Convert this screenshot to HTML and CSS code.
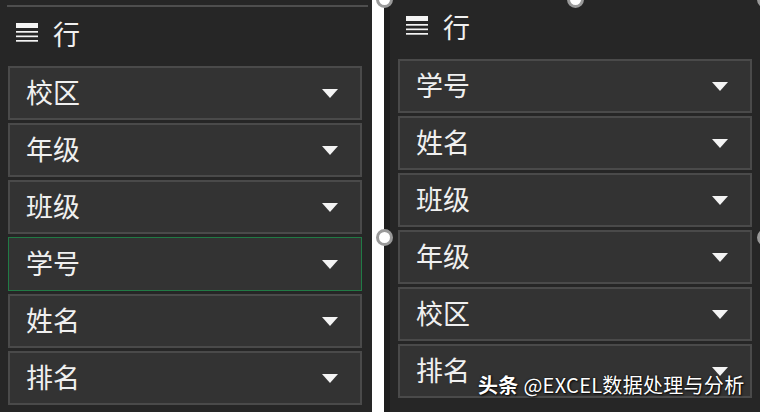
FILE: index.html
```html
<!DOCTYPE html>
<html lang="zh">
<head>
<meta charset="utf-8">
<link rel="stylesheet" href="styles.css">
</head>
<body>
<div class="stage">
  <section class="panel panel-left">
    <div class="rule"></div>
    <div class="head">
      <svg class="rows-icon" width="22" height="20" viewBox="0 0 22 20"><rect x="0" y="0" width="22" height="5" fill="#f4f4f4"/><rect x="0" y="8" width="22" height="1.7" fill="#f4f4f4"/><rect x="0" y="12.5" width="22" height="1.7" fill="#f4f4f4"/><rect x="0" y="17" width="22" height="1.7" fill="#f4f4f4"/></svg>
      <span class="head-text">行</span>
    </div>
    <ul class="fields">
      <li class="field"><span>校区</span><i class="arrow"></i></li>
      <li class="field"><span>年级</span><i class="arrow"></i></li>
      <li class="field"><span>班级</span><i class="arrow"></i></li>
      <li class="field selected"><span>学号</span><i class="arrow"></i></li>
      <li class="field"><span>姓名</span><i class="arrow"></i></li>
      <li class="field"><span>排名</span><i class="arrow"></i></li>
    </ul>
  </section>
  <section class="panel panel-right">
    <div class="head">
      <svg class="rows-icon" width="22" height="20" viewBox="0 0 22 20"><rect x="0" y="0" width="22" height="5" fill="#f4f4f4"/><rect x="0" y="8" width="22" height="1.7" fill="#f4f4f4"/><rect x="0" y="12.5" width="22" height="1.7" fill="#f4f4f4"/><rect x="0" y="17" width="22" height="1.7" fill="#f4f4f4"/></svg>
      <span class="head-text">行</span>
    </div>
    <ul class="fields">
      <li class="field"><span>学号</span><i class="arrow"></i></li>
      <li class="field"><span>姓名</span><i class="arrow"></i></li>
      <li class="field"><span>班级</span><i class="arrow"></i></li>
      <li class="field"><span>年级</span><i class="arrow"></i></li>
      <li class="field"><span>校区</span><i class="arrow"></i></li>
      <li class="field"><span>排名</span><i class="arrow"></i></li>
    </ul>
  </section>
  <span class="handle h-tl"></span>
  <span class="handle h-tm"></span>
  <span class="handle h-tr"></span>
  <span class="handle h-ml"></span>
  <span class="handle h-mr"></span>
  <div class="watermark"><b>头条</b> @EXCEL数据处理与分析</div>
</div>
</body>
</html>
```
FILE: styles.css
```css
html, body {
  margin: 0;
  padding: 0;
  background: #ffffff;
}
.stage {
  position: relative;
  width: 760px;
  height: 412px;
  overflow: hidden;
  display: flex;
  font-family: "Noto Sans CJK SC", "Noto Sans", sans-serif;
  color: #f0f0f0;
}
.panel {
  background: #262626;
  height: 412px;
  display: flex;
  flex-direction: column;
}
.panel-left {
  width: 372px;
}
.panel-right {
  margin-left: 12px;
  width: 370px;
  border-left: 6px solid #1e1e1e;
  flex: 1;
}
.rule {
  margin: 5px 4px 0 7px;
  height: 2px;
  background: #4e4e4e;
}
.head {
  display: flex;
  align-items: flex-start;
  box-sizing: border-box;
  gap: 15px;
  height: 59px;
  padding: 16px 0 0 16px;
}
.rows-icon {
  display: block;
}
.head-text {
  font-size: 27px;
  line-height: 26px;
  margin-top: -2px;
}
.fields {
  list-style: none;
  margin: 0;
  padding: 0 0 0 8px;
  width: 354px;
  display: flex;
  flex-direction: column;
  gap: 3px;
}
.field {
  box-sizing: border-box;
  height: 54px;
  background: #333333;
  border: 2px solid #4a4a4a;
  display: flex;
  align-items: center;
  justify-content: space-between;
  padding: 0 22px 0 16px;
  font-size: 27px;
  line-height: 26px;
}
.field.selected {
  border: 1px solid #217a45;
  padding: 0 23px 0 17px;
}
.field span {
  margin-top: -2px;
}
.arrow {
  display: block;
  width: 0;
  height: 0;
  border-left: 8.5px solid transparent;
  border-right: 8.5px solid transparent;
  border-top: 9px solid #f4f4f4;
}
.handle {
  position: absolute;
  width: 11px;
  height: 11px;
  border: 3px solid #9a9a9a;
  border-radius: 50%;
  background: #ffffff;
}
.h-tl { left: 376px; top: -9px; }
.h-tm { left: 567px; top: -9px; }
.h-tr { left: 757px; top: -9px; }
.h-ml { left: 376px; top: 229px; }
.h-mr { left: 757px; top: 229px; }
.watermark {
  position: absolute;
  left: 478px;
  top: 372px;
  font-size: 20px;
  letter-spacing: 0.3px;
  line-height: 26px;
  color: #ffffff;
  text-shadow: 1px 1px 2px rgba(0,0,0,0.9), 0 0 2px rgba(0,0,0,0.7);
  white-space: nowrap;
}
.watermark b {
  font-weight: 700;
}
```
